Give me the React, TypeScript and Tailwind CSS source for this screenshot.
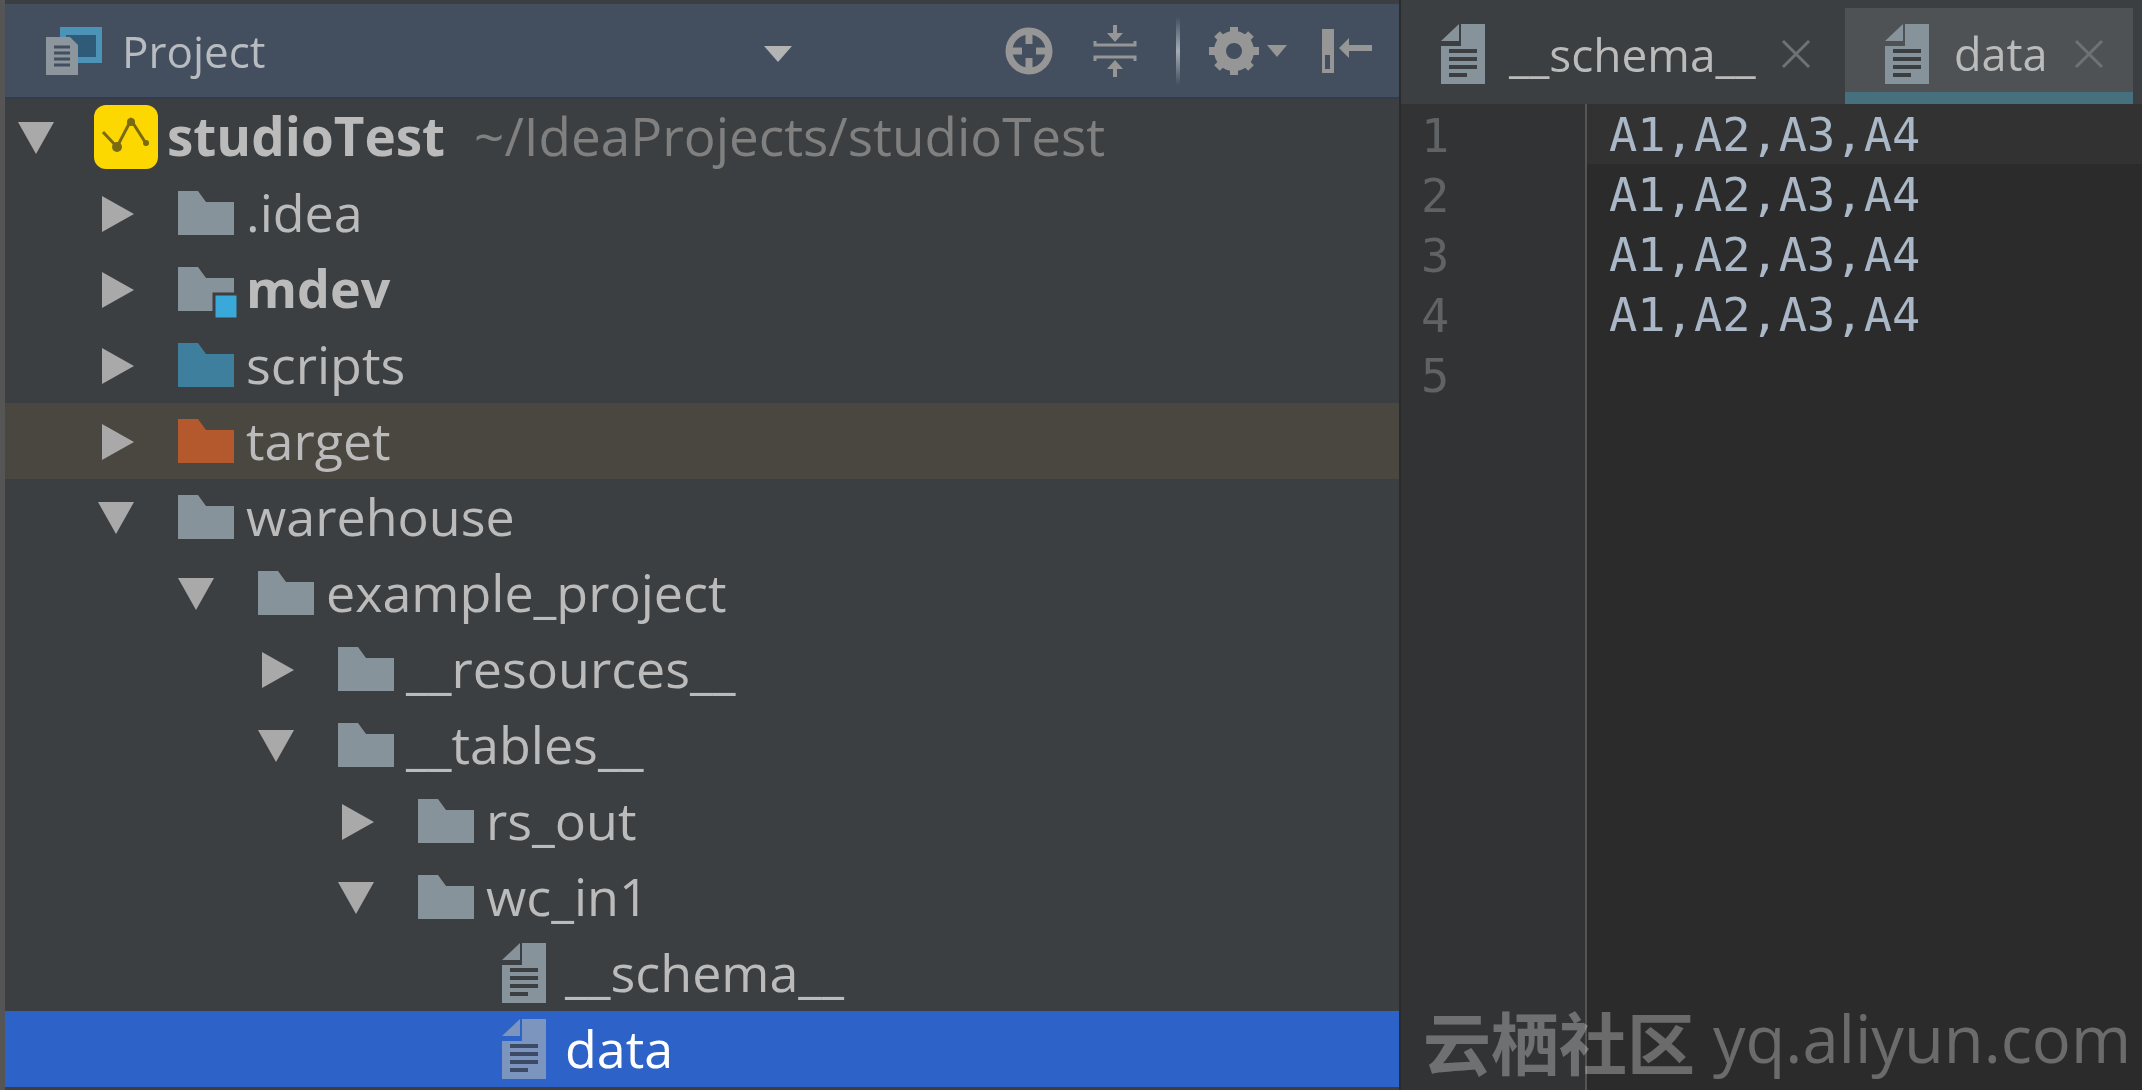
import React from "react";

const sans = "font-['Open_Sans','Noto_Sans',sans-serif]";
const mono = "font-['DejaVu_Sans_Mono',monospace]";

type Row = {
  name: string;
  depth: number;
  arrow?: "right" | "down";
  icon: "folder" | "module" | "scripts" | "target" | "file" | "logo";
  bold?: boolean;
  hint?: string;
  tone?: "excluded" | "selected";
};

const rows: Row[] = [
  { name: "studioTest", depth: 0, arrow: "down", icon: "logo", bold: true, hint: "~/IdeaProjects/studioTest" },
  { name: ".idea", depth: 1, arrow: "right", icon: "folder" },
  { name: "mdev", depth: 1, arrow: "right", icon: "module", bold: true },
  { name: "scripts", depth: 1, arrow: "right", icon: "scripts" },
  { name: "target", depth: 1, arrow: "right", icon: "target", tone: "excluded" },
  { name: "warehouse", depth: 1, arrow: "down", icon: "folder" },
  { name: "example_project", depth: 2, arrow: "down", icon: "folder" },
  { name: "__resources__", depth: 3, arrow: "right", icon: "folder" },
  { name: "__tables__", depth: 3, arrow: "down", icon: "folder" },
  { name: "rs_out", depth: 4, arrow: "right", icon: "folder" },
  { name: "wc_in1", depth: 4, arrow: "down", icon: "folder" },
  { name: "__schema__", depth: 5, icon: "file" },
  { name: "data", depth: 5, icon: "file", tone: "selected" },
];

const Arrow = ({ dir }: { dir?: "right" | "down" }) => (
  <svg width="40" height="40" viewBox="0 0 40 40" className="mt-[2px] shrink-0">
    {dir === "down" && <polygon points="2,4 38,4 20,36" fill="#a9a9a9" />}
    {dir === "right" && <polygon points="6,2 38,20 6,38" fill="#a9a9a9" />}
  </svg>
);

const Folder = ({ color, badge }: { color: string; badge?: boolean }) => (
  <svg width="60" height="44" viewBox="0 0 60 44" className="shrink-0 overflow-visible">
    <path d="M0 0H20L28 11H56V44H0Z" fill={color} />
    {badge && <rect x="36" y="27" width="24" height="25" fill="#3aa8d8" stroke="#3c3f41" strokeWidth="3" />}
  </svg>
);

const FileIcon = ({ color = "#87939a", lines = "#3c3f41" }: { color?: string; lines?: string }) => (
  <svg width="44" height="60" viewBox="0 0 44 60" className="shrink-0">
    <path d="M20 0H44V60H0V22H20Z" fill={color} />
    <path d="M18 0V17H0Z" fill={color} />
    <rect x="8" y="25" width="28" height="4" fill={lines} />
    <rect x="8" y="33" width="28" height="4" fill={lines} />
    <rect x="8" y="41" width="28" height="4" fill={lines} />
    <rect x="8" y="49" width="18" height="4" fill={lines} />
  </svg>
);

const Logo = () => (
  <svg width="64" height="64" viewBox="0 0 64 64" className="shrink-0">
    <rect width="64" height="64" rx="12" fill="#fdd800" />
    <polyline points="9,27 23,42 37,15 53,40" fill="none" stroke="#7a6a12" strokeWidth="3" />
    <circle cx="23" cy="42" r="5" fill="#7a6a12" />
    <circle cx="37" cy="17" r="4" fill="#7a6a12" />
    <circle cx="52" cy="38" r="3" fill="#7a6a12" />
  </svg>
);

const TreeIcon = ({ row }: { row: Row }) => {
  if (row.icon === "logo") return <Logo />;
  if (row.icon === "file")
    return row.tone === "selected" ? <FileIcon color="#7b95bf" lines="#3c4a66" /> : <FileIcon />;
  if (row.icon === "scripts") return <Folder color="#3f7f9e" />;
  if (row.icon === "target") return <Folder color="#b3592d" />;
  if (row.icon === "module") return <Folder color="#87939a" badge />;
  return <Folder color="#87939a" />;
};

const TreeRow = ({ row }: { row: Row }) => {
  const isLogo = row.icon === "logo";
  const isFile = row.icon === "file";
  let bg = "";
  let color = "text-[#bbbbbb]";
  if (row.tone === "excluded") bg = "bg-[#4a4640]";
  if (row.tone === "selected") {
    bg = "bg-[#2d62c9]";
    color = "text-white";
  }
  return (
    <div
      className={`flex h-[76px] items-center whitespace-nowrap ${bg} ${color}`}
      style={{ paddingLeft: 11 + row.depth * 80 }}
    >
      <Arrow dir={row.arrow} />
      <div className={isLogo ? "ml-[38px]" : isFile ? "ml-[46px]" : "ml-[42px]"}>
        <TreeIcon row={row} />
      </div>
      <span
        className={`mb-[2px] ${isLogo ? "ml-[9px] text-[53px]" : isFile ? "ml-[19px] text-[52px]" : "ml-[8px] text-[52px]"} ${
          row.bold ? "font-bold" : ""
        }`}
      >
        {row.name}
      </span>
      {row.hint && <span className="mb-[2px] ml-[29px] text-[53px] text-[#808080]">{row.hint}</span>}
    </div>
  );
};

const ToolIcons = () => (
  <div className="flex items-center text-[#8c8c8c]">
    <svg width="48" height="48" viewBox="0 0 48 48">
      <circle cx="24" cy="24" r="20" fill="none" stroke="#969696" strokeWidth="7" />
      <path d="M24 4V17M24 31V44M4 24H17M31 24H44" stroke="#969696" strokeWidth="7" />
    </svg>
    <svg width="44" height="52" viewBox="0 0 44 52" className="ml-[40px]">
      <path d="M22 0V9M22 52V42" stroke="#969696" strokeWidth="4" />
      <path d="M14 8H30L22 17ZM14 44H30L22 35Z" fill="#969696" />
      <path d="M2 16V20H42V16M2 36V32H42V36" fill="none" stroke="#969696" strokeWidth="3" />
    </svg>
    <div className="ml-[39px] h-[68px] w-[4px] bg-gradient-to-b from-transparent via-[#a4abb5] to-transparent" />
    <svg width="50" height="48" viewBox="0 0 50 48" className="ml-[29px]">
      <circle cx="25" cy="24" r="14" fill="none" stroke="#969696" strokeWidth="12" />
      <path
        d="M25 0V10M25 38V48M0 24H11M39 24H50M8 7L15 14M35 34L42 41M42 7L35 14M15 34L8 41"
        stroke="#969696"
        strokeWidth="8"
      />
    </svg>
    <svg width="20" height="12" viewBox="0 0 20 12" className="ml-[8px]">
      <polygon points="0,0 20,0 10,12" fill="#969696" />
    </svg>
    <svg width="50" height="44" viewBox="0 0 50 44" className="ml-[35px]">
      <path d="M0 0H12V44H0ZM3 26V40H8V26Z" fill="#969696" fillRule="evenodd" />
      <path d="M17 19L27 9V16H50V22H27V29Z" fill="#969696" />
    </svg>
  </div>
);

const ProjectIcon = () => (
  <svg width="56" height="48" viewBox="0 0 56 48" className="shrink-0">
    <rect x="14" y="0" width="42" height="36" fill="#4c93b8" />
    <rect x="20" y="8" width="30" height="22" fill="#2f5a78" />
    <path d="M0 10H24L32 18V48H0Z" fill="#8d969c" />
    <path d="M8 20H24M8 26H24M8 32H24M8 38H24" stroke="#424f60" strokeWidth="3" />
  </svg>
);

const Tab = ({ name, active }: { name: string; active?: boolean }) => (
  <div
    className={`flex h-[96px] items-center border-b-[12px] pt-[8px] pl-[40px] ${
      active ? "w-[288px] border-[#47707f] bg-[#4e5254]" : "w-[444px] border-transparent"
    }`}
  >
    <FileIcon color="#87939a" lines="#3c3f41" />
    <span className={`${active ? "ml-[25px] text-[45px]" : "ml-[24px] text-[46px]"} text-[#bbbbbb]`}>{name}</span>
    <svg width="30" height="30" viewBox="0 0 30 30" className={active ? "ml-[26px]" : "ml-[25px]"}>
      <path d="M2 2L28 28M28 2L2 28" stroke="#6e7274" strokeWidth="3" />
    </svg>
  </div>
);

const codeLines = ["A1,A2,A3,A4", "A1,A2,A3,A4", "A1,A2,A3,A4", "A1,A2,A3,A4", ""];

export default function App() {
  return (
    <div className={`relative flex h-[1090px] w-[2142px] overflow-hidden bg-[#3c3f41] blur-[0.6px] ${sans}`}>
      <div className="flex w-[1399px] flex-col border-l-[5px] border-[#555555] pt-[4px]">
        <div className="flex h-[95px] items-center border-b-2 border-[#323c4b] bg-[#434f5f] pl-[41px]">
          <ProjectIcon />
          <span className="ml-[20px] text-[44px] text-[#b8bcc1]">Project</span>
          <svg width="28" height="16" viewBox="0 0 28 16" className="mt-[6px] ml-[498px]">
            <polygon points="0,0 28,0 14,16" fill="#b4b4b4" />
          </svg>
          <div className="ml-[213px]">
            <ToolIcons />
          </div>
        </div>
        <div>
          {rows.map((row) => (
            <TreeRow key={row.name} row={row} />
          ))}
        </div>
      </div>
      <div className="flex w-[2px] bg-[#2b2b2b]" />
      <div className="flex flex-1 flex-col pt-[8px]">
        <div className="flex">
          <Tab name="__schema__" />
          <Tab name="data" active />
        </div>
        <div className={`flex flex-1 bg-[#2b2b2b] ${mono}`}>
          <div className="w-[186px] border-r-2 border-[#555555] bg-[#313335] pl-[20px] text-[47px] text-[#606366]">
            {codeLines.map((_, i) => (
              <div key={i} className="h-[60px] leading-[64px]">
                {i + 1}
              </div>
            ))}
          </div>
          <div className="flex-1 text-[47px] text-[#a9b7c6]">
            {codeLines.map((line, i) => (
              <div key={i} className={`h-[60px] pl-[22px] leading-[62px] ${i === 0 ? "bg-[#323232]" : ""}`}>
                {line}
              </div>
            ))}
          </div>
        </div>
      </div>
      <div className="absolute left-[1423px] top-[1001px] flex items-center whitespace-nowrap text-white/30">
        <span className="font-['Noto_Sans_CJK_SC',sans-serif] text-[68px] font-bold leading-[80px]">云栖社区</span>
        <span className="mb-[6px] ml-[18px] text-[65px] leading-[74px]">yq.aliyun.com</span>
      </div>
    </div>
  );
}
